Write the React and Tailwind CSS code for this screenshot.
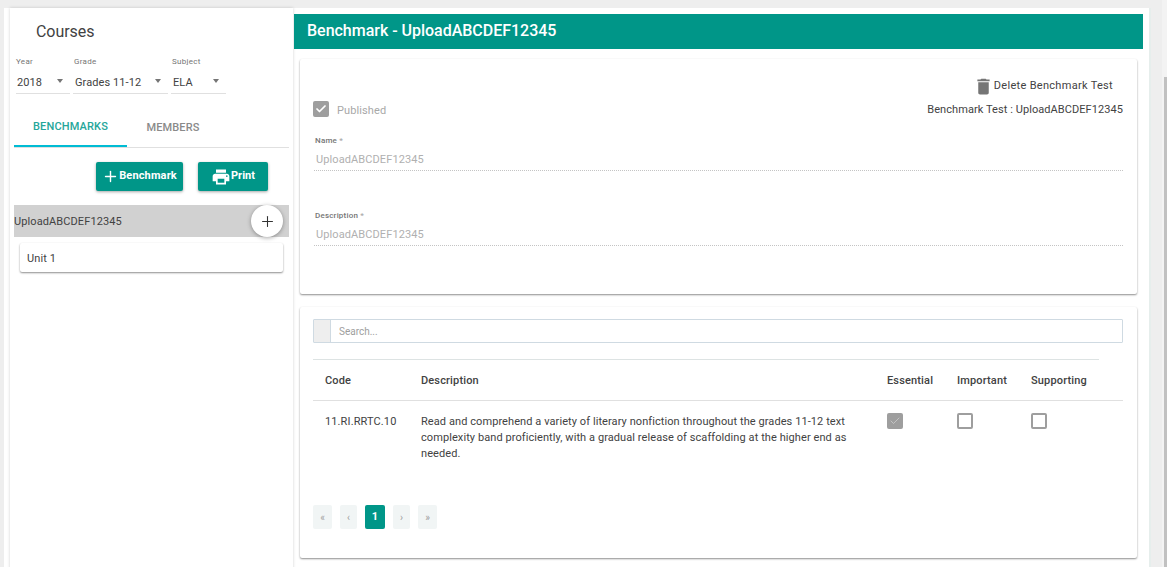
import { Plus, Check } from "lucide-react";
import { MdPrint, MdDelete } from "react-icons/md";

function Select({ label, value, className, first }) {
  return (
    <div className={className}>
      <div className={first ? "text-[8px] leading-[12px] text-[#757575] tracking-[0.3px]" : "text-[8px] leading-[12px] text-[#757575] tracking-[0.3px] pl-[1px]"}>{label}</div>
      <div className={first ? "mt-[3px] h-[23px] border-b border-[#e0e0e0] flex items-center justify-between pl-[1px] pr-[7px] pt-[2px] text-[11px] text-[#424242] tracking-[0.08px]" : "mt-[3px] h-[23px] border-b border-[#e0e0e0] flex items-center justify-between pl-[2px] pr-[7px] pt-[2px] text-[11px] text-[#424242] tracking-[0.08px]"}>
        <span>{value}</span>
        <span className="w-0 h-0 border-x-[3.5px] border-x-transparent border-t-[4px] border-t-[#757575] mb-[4px]" />
      </div>
    </div>
  );
}

function Box({ checked, muted }) {
  if (checked) {
    return (
      <span className="block w-4 h-4 rounded-[2px] bg-[#9e9e9e] flex items-center justify-center">
        <Check className={muted ? "w-3 h-3 text-[#cfcfcf]" : "w-3 h-3 text-white"} strokeWidth={muted ? 1.5 : 3.5} />
      </span>
    );
  }
  return <span className="block w-4 h-4 rounded-[2px] border-2 border-[#9e9e9e]" />;
}

function PageBtn({ label, className }) {
  return (
    <span className={"h-6 rounded-[2px] bg-[#f1f5f5] text-[#9e9e9e] text-[10px] flex items-center justify-center " + className}>
      {label}
    </span>
  );
}

export default function App() {
  return (
    <div className="w-[1167px] h-[567px] overflow-hidden bg-[#eeeeee] flex font-['Roboto',sans-serif]">
      <div className="w-[1147px] ml-1 mt-2 h-[600px] bg-white border-r-2 border-[#e6eeec] shrink-0 flex pl-[6px]">
        {/* Left column */}
        <div className="w-[283px] h-full shrink-0 shadow-[0_0_3px_rgba(0,0,0,0.18)] pl-1 pr-1">
          <h2 className="pl-[22px] pt-[13px] text-[16px] leading-[22px] text-[#424242] -tracking-[0.05px]">Courses</h2>
          <div className="flex mt-[13px] pl-[2px]">
            <Select first label="Year" value="2018" className="w-[54px]" />
            <Select label="Grade" value="Grades 11-12" className="w-[95px] ml-[3px]" />
            <Select label="Subject" value="ELA" className="w-[55px] ml-[3px]" />
          </div>
          <div className="flex mt-[15px] h-[39px] border-b border-[#e0e0e0] text-[11px] font-medium tracking-[0.15px]">
            <div className="w-[113px] h-[38px] flex items-center justify-center text-[#26a69a] border-b-2 border-[#00bcd4]">BENCHMARKS</div>
            <div className="w-[92px] flex items-center justify-center text-[#8a8a8a]">MEMBERS</div>
          </div>
          <div className="flex mt-[14px] pl-[82px] gap-[15px]">
            <button className="w-[87px] h-[29px] rounded-[2px] bg-[#009688] text-white text-[11px] font-bold tracking-[0.15px] flex items-center justify-center shadow-[0_1px_3px_rgba(0,0,0,0.35)]">
              <Plus className="w-[17px] h-[17px]" strokeWidth={2} />
              Benchmark
            </button>
            <button className="w-[70px] h-[29px] rounded-[2px] bg-[#009688] text-white text-[11px] font-bold flex items-center justify-center shadow-[0_1px_3px_rgba(0,0,0,0.35)]">
              <MdPrint className="w-[20px] h-[20px]" />
              Print
            </button>
          </div>
          <div className="mt-[14px] h-[32px] bg-[#d1d1d1] flex items-center justify-between pr-[6px] text-[11px] text-[#424242] tracking-[0.1px]">
            <span className="pt-[2px]">UploadABCDEF12345</span>
            <span className="w-[32px] h-[32px] rounded-full bg-white flex items-center justify-center shadow-[0_1px_4px_rgba(0,0,0,0.35)]">
              <Plus className="w-[17px] h-[17px] text-[#333]" strokeWidth={1.5} />
            </span>
          </div>
          <div className="mt-[6px] mx-[6px] h-[29px] flex items-center pl-[7px] pt-[3px] bg-white rounded-[2px] text-[11px] text-[#424242] tracking-[0.1px] shadow-[0_1px_2px_rgba(0,0,0,0.45)]">
            Unit 1
          </div>
        </div>

        {/* Right column */}
        <div className="w-[849px] shrink-0 ml-[1px] pt-[6px]">
          <div className="h-[35px] bg-[#009688] text-white text-[16px] font-medium flex items-center pl-[13px] pb-[1px] -tracking-[0.02px]">
            Benchmark - UploadABCDEF12345
          </div>
          <div className="mx-[6px] mt-[10px] h-[235px] bg-white rounded-[2px] shadow-[0_1px_2px_rgba(0,0,0,0.45)] px-[14px]">
            <div className="flex justify-between">
              <div className="flex items-center mt-[42px] h-4 -ml-[1px]">
                <Box checked />
                <span className="ml-2 pt-[4px] text-[11px] text-[#a8a8a8] tracking-[0.1px]">Published</span>
              </div>
              <div className="flex flex-col items-end pt-[19px]">
                <div className="flex items-center mr-[10px] text-[11px] text-[#424242] tracking-[0.3px]">
                  <MdDelete className="w-[21px] h-[21px] text-[#757575] -my-[3px] -ml-[4px] mt-[-2px] mr-0" />
                  Delete Benchmark Test
                </div>
                <div className="mt-[7px] text-[11px] text-[#424242] tracking-[0.07px]">Benchmark Test : UploadABCDEF12345</div>
              </div>
            </div>
            <div className="mt-[17px] ml-[1px] text-[8px] leading-[12px] font-medium text-[#757575] tracking-[0.2px]">Name <span className="text-[#a8a8a8]">*</span></div>
            <div className="mt-[5px] h-[19px] border-b border-dotted border-[#c4c4c4] text-[11px] leading-[15px] text-[#b0b0b0] tracking-[0.1px] pl-[2px]">UploadABCDEF12345</div>
            <div className="mt-[39px] ml-[1px] text-[8px] leading-[12px] font-medium text-[#757575] tracking-[0.2px]">Description <span className="text-[#a8a8a8]">*</span></div>
            <div className="mt-[5px] h-[19px] border-b border-dotted border-[#c4c4c4] text-[11px] leading-[15px] text-[#b0b0b0] tracking-[0.1px] pl-[2px]">UploadABCDEF12345</div>
          </div>

          <div className="mx-[6px] mt-[13px] h-[251px] bg-white rounded-[2px] shadow-[0_1px_2px_rgba(0,0,0,0.45)] pl-[13px] pr-[14px] pt-[12px]">
            <div className="flex h-6 border border-[#cfdae2] rounded-[1px]">
              <span className="w-[17px] bg-[#eeeeee] border-r border-[#cfdae2]" />
              <span className="pl-2 pt-[1px] text-[10px] leading-[22px] text-[#9e9e9e]">Search...</span>
            </div>
            <div className="mt-[16px] w-[786px] border-t border-[#dde3e3]" />
            <div className="flex h-[41px] items-center pt-[2px] border-b border-[#e0e0e0] text-[11px] font-medium text-[#424242] tracking-[0.15px]">
              <span className="w-[108px] pl-3">Code</span>
              <span className="w-[466px]">Description</span>
              <span className="w-[70px]">Essential</span>
              <span className="w-[74px]">Important</span>
              <span>Supporting</span>
            </div>
            <div className="flex h-[88px] pt-[13px] text-[11px] leading-[16px] text-[#424242] tracking-[0.08px]">
              <span className="w-[108px] pl-3 tracking-[0.12px]">11.RI.RRTC.10</span>
              <p className="w-[466px] pr-[30px]">
                Read and comprehend a variety of literary nonfiction throughout the grades 11-12 text complexity band proficiently, with a gradual release of scaffolding at the higher end as needed.
              </p>
              <span className="w-[70px] -mt-[1px]"><Box checked muted /></span>
              <span className="w-[74px] -mt-[1px]"><Box /></span>
              <span className="-mt-[1px]"><Box /></span>
            </div>
            <div className="flex items-center gap-[8px] mt-[16px]">
              <PageBtn label="«" className="w-[19px]" />
              <PageBtn label="‹" className="w-[17px]" />
              <span className="w-5 h-6 rounded-[2px] bg-[#009688] text-white text-[11px] font-bold flex items-center justify-center">1</span>
              <PageBtn label="›" className="w-[17px]" />
              <PageBtn label="»" className="w-[19px]" />
            </div>
          </div>
        </div>
      </div>
      <div className="w-[11px] shrink-0" />
      <div className="w-[5px] shrink-0 h-[567px] bg-[#f3f3f3] flex flex-col items-end">
        <div className="h-[77px] shrink-0" />
        <div className="w-[3px] flex-1 bg-[#c1c1c1]" />
      </div>
    </div>
  );
}
